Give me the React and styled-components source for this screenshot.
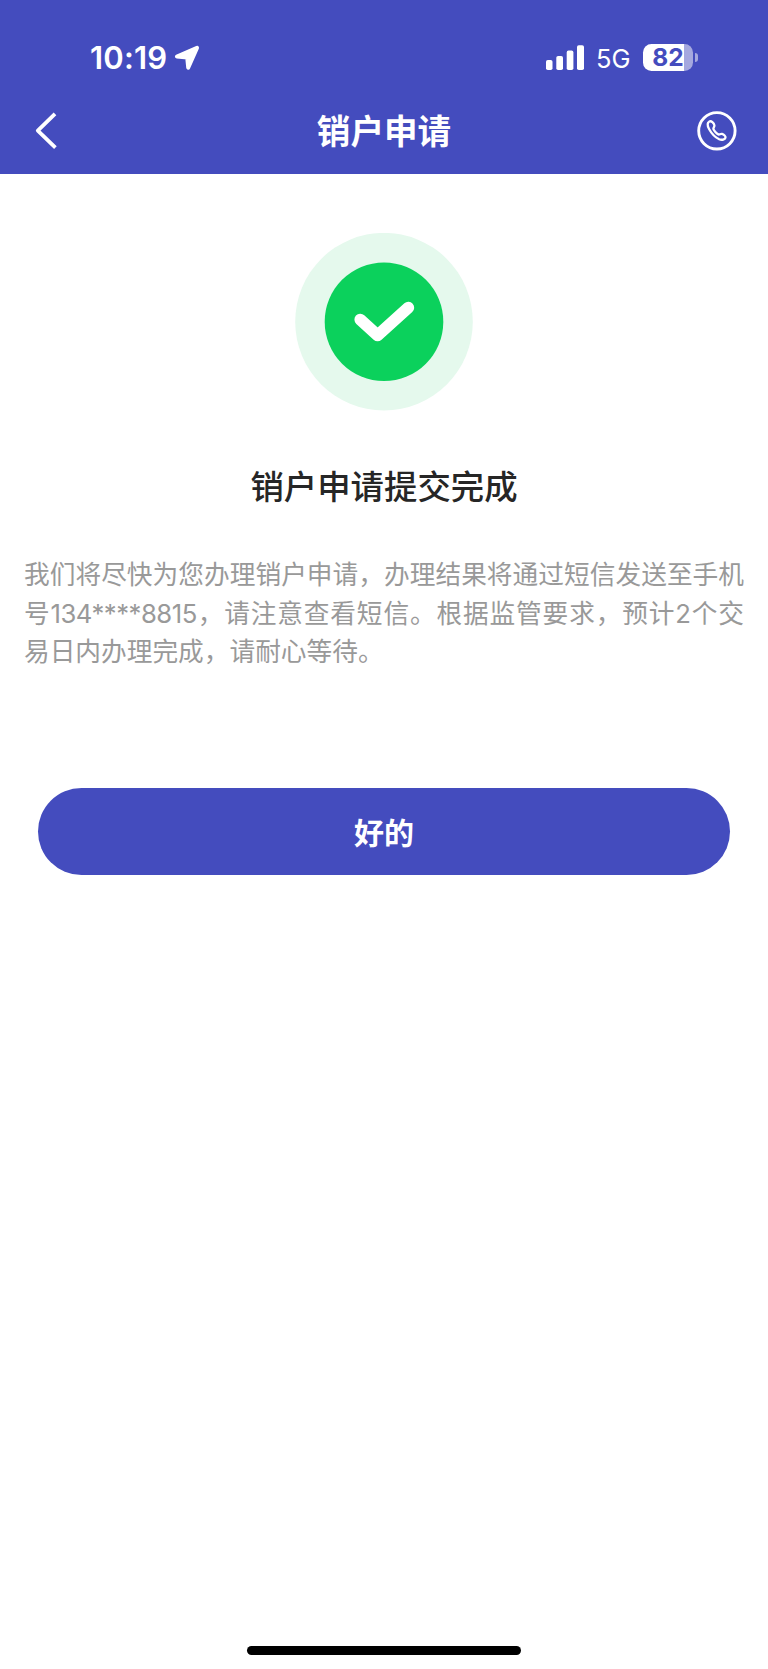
import React from 'react'
import styled, { createGlobalStyle } from 'styled-components'

const GlobalStyle = createGlobalStyle`
  body {
    margin: 0;
    background: #fff;
    font-family: Inter, "Noto Sans CJK SC", sans-serif;
  }
`

function StatusBar() {
  return (
    <Status>
      <Time>10:19</Time>
      <svg width="27" height="27" viewBox="0 0 27 27">
        <path
          d="M3.9 12.5 L24 3.9 L15.2 23.6 L14.2 13.4 Z"
          fill="#fff" stroke="#fff" strokeWidth="4" strokeLinejoin="round"
        />
      </svg>
      <Spacer />
      <svg width="38" height="25" viewBox="0 0 38 25" fill="#fff">
        <rect x="0" y="15" width="6.5" height="10" rx="1.8" />
        <rect x="10.3" y="11" width="6.7" height="14" rx="1.8" />
        <rect x="20.7" y="5.6" width="6.7" height="19.4" rx="1.8" />
        <rect x="31" y="0.3" width="7" height="24.7" rx="1.8" />
      </svg>
      <Network>5G</Network>
      <Battery>
        <Level>82</Level>
      </Battery>
      <Nub />
    </Status>
  )
}

function App() {
  return (
    <Page>
      <GlobalStyle />
      <Header>
        <StatusBar />
        <NavBar>
          <IconButton type="button" aria-label="返回">
            <svg width="24" height="40" viewBox="0 0 24 40">
              <path d="M21 2.8 L3.8 19.6 L21.4 36.6" fill="none" stroke="#fff" strokeWidth="3.8" strokeLinejoin="round" />
            </svg>
          </IconButton>
          <NavTitle>销户申请</NavTitle>
          <IconButton type="button" aria-label="客服电话">
            <svg width="40" height="40" viewBox="0 0 40 40" fill="none" stroke="#fff">
              <circle cx="19.9" cy="19.8" r="18.2" strokeWidth="2.9" />
              <path
                d="M12.2 10.6 C10.2 11.9 10.3 14.8 12.2 18.2 C14.4 22.2 18.4 26.4 22.2 28.2 C25 29.4 27.9 28.5 28.5 26.6 C28.9 25.3 26.9 23.5 25 22.9 C23.3 22.5 22.6 23.9 21.3 23.4 C19.6 22.7 16.8 19.6 16.4 18 C16.1 16.7 17.6 16.1 17.4 14.4 C17 12 14.2 9.3 12.2 10.6 Z"
                strokeWidth="2.3" strokeLinejoin="round"
              />
            </svg>
          </IconButton>
        </NavBar>
      </Header>
      <Content>
        <svg width="178" height="178" viewBox="0 0 178 178">
          <circle cx="89" cy="88.7" r="88.8" fill="#e5f9ed" />
          <circle cx="89" cy="88.7" r="59.3" fill="#0bd15c" />
          <path
            d="M65.3 86.6 L82.6 102.4 L113.3 74.7"
            fill="none" stroke="#fff" strokeWidth="11.8" strokeLinecap="round" strokeLinejoin="round"
          />
        </svg>
        <Title>销户申请提交完成</Title>
        <Message>
          <Line $fill>我们将尽快为您办理销户申请，办理结果将通过短信发送至手机</Line>
          <Line $fill>号<Phone>134****8815</Phone>，请注意查看短信。根据监管要求，预计2个交</Line>
          <Line>易日内办理完成，请耐心等待。</Line>
        </Message>
        <Button type="button">好的</Button>
      </Content>
      <HomeBar />
    </Page>
  )
}

const Page = styled.div`
  display: flex;
  flex-direction: column;
  align-items: center;
  width: 768px;
  height: 1669px;
  overflow: hidden;
  background: #fff;
`

const Header = styled.header`
  width: 100%;
  height: 174px;
  background: #444cbe;
  color: #fff;
`

/* phone status row */
const Status = styled.div`
  display: flex;
  align-items: center;
  box-sizing: border-box;
  height: 87px;
  padding: 27px 70px 0 90px;
`

const Time = styled.span`
  width: 83px;
  font-size: 31px;
  font-weight: 600;
  letter-spacing: 0.2px;
  white-space: nowrap;
`

const Spacer = styled.div`
  flex: 1;
`

const Network = styled.span`
  width: 34px;
  margin: 2px 13px 0 12px;
  font-size: 25.5px;
`

const Battery = styled.div`
  display: flex;
  align-items: center;
  justify-content: center;
  width: 50px;
  height: 27px;
  border-radius: 8.5px;
  background: linear-gradient(to right, #fff 41px, #a5a8df 41px);
`

const Level = styled.span`
  color: #444cbe;
  font-size: 24.5px;
  font-weight: 700;
  line-height: 27px;
`

const Nub = styled.div`
  width: 3px;
  height: 9px;
  margin-left: 2px;
  border-radius: 0 4px 4px 0;
  background: #a5a8df;
`

const NavBar = styled.nav`
  display: flex;
  align-items: center;
  justify-content: space-between;
  height: 87px;
  padding: 0 31px 0 34px;
`

const IconButton = styled.button`
  display: flex;
  width: 40px;
  padding: 0;
  border: none;
  background: none;
  cursor: pointer;
`

const NavTitle = styled.h1`
  margin: 0;
  padding: 3px 3px 0 0;
  font-size: 33.6px;
  font-weight: 700;
  line-height: 48px;
`

const Content = styled.main`
  display: flex;
  flex-direction: column;
  align-items: center;
  flex: 1;
  width: 100%;
  padding-top: 59px;
`

const Title = styled.h2`
  margin: 51px 0 0;
  color: #262626;
  font-size: 33.4px;
  font-weight: 500;
  line-height: 50px;
`

const Message = styled.div`
  width: 720px;
  margin-top: 44px;
  color: #999;
  font-size: 25.7px;
  line-height: 38.6px;
`

const Line = styled.p`
  margin: 0;
  height: 38.6px;
  white-space: nowrap;
  text-align: left;
  text-align-last: ${({ $fill }) => ($fill ? 'justify' : 'left')};
`

const Phone = styled.span`
  letter-spacing: -0.5px;
`

const Button = styled.button`
  width: 692px;
  height: 86.5px;
  margin-top: 116.5px;
  padding: 0 0 2px;
  border: none;
  border-radius: 44px;
  background: #444cbe;
  color: #fff;
  font-family: inherit;
  font-size: 30px;
  font-weight: 700;
  cursor: pointer;
`

const HomeBar = styled.div`
  width: 274px;
  height: 9px;
  margin-bottom: 14.5px;
  border-radius: 5px;
  background: #000;
`

export default App
